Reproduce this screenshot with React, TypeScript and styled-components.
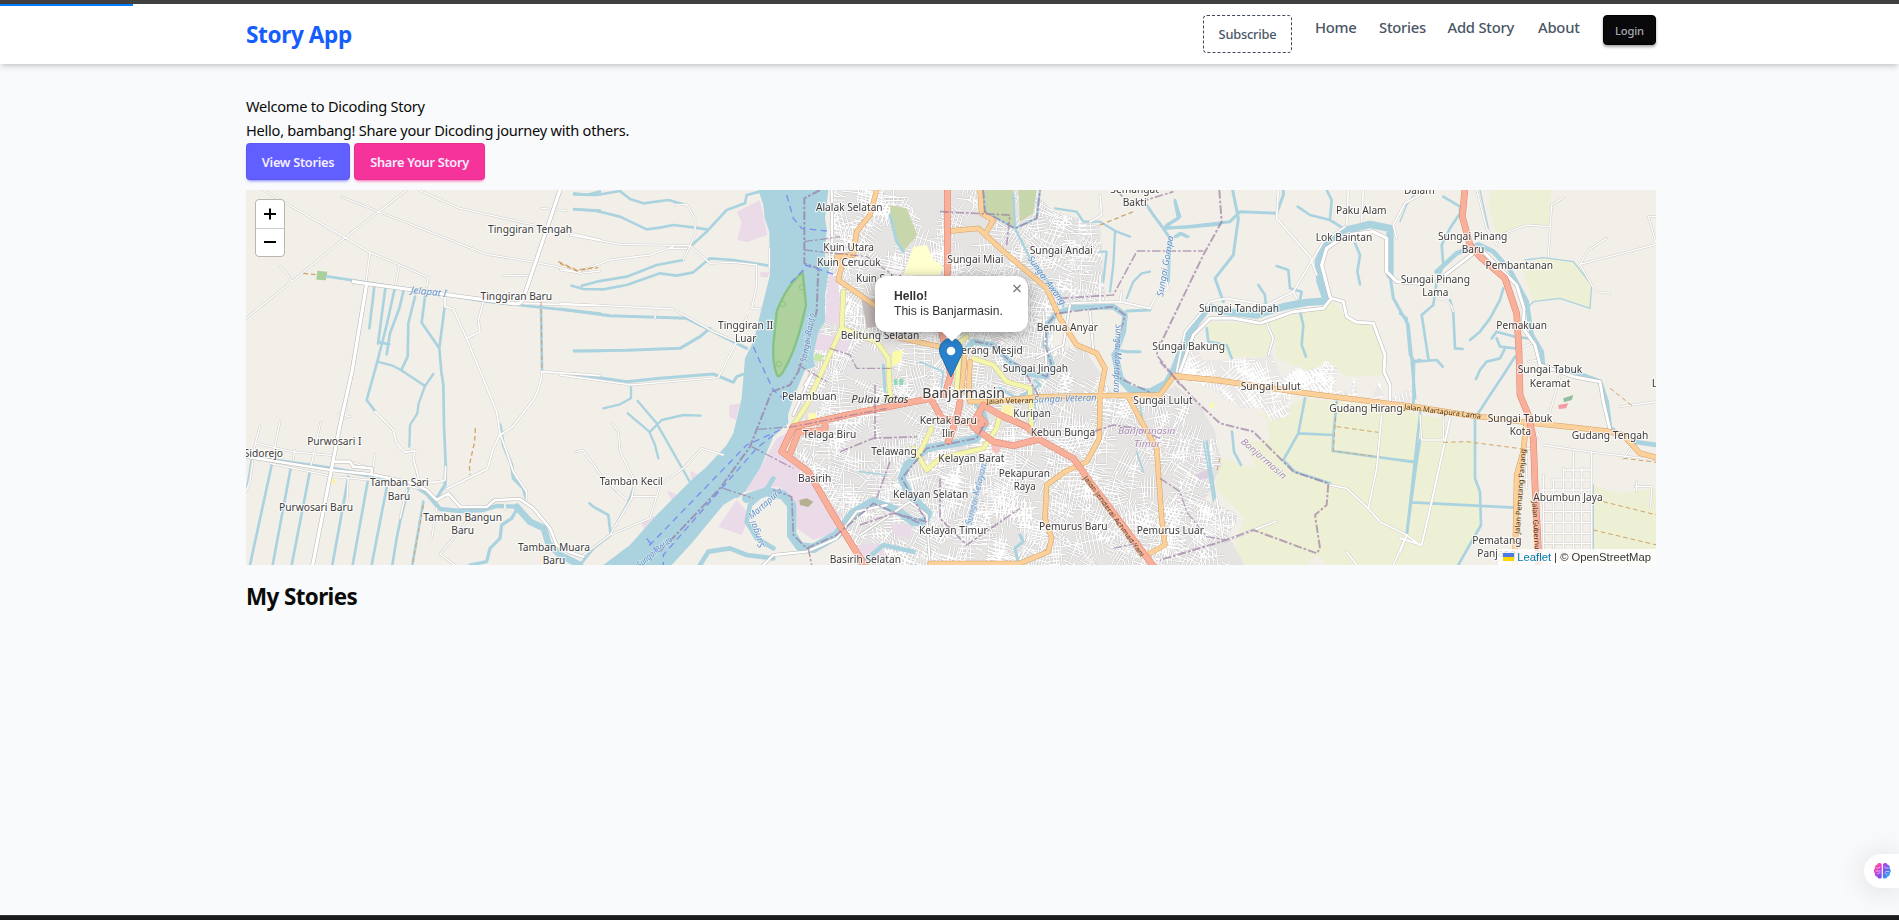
import React from 'react';
import styled, { createGlobalStyle } from 'styled-components';

const Global = createGlobalStyle`
  * { box-sizing: border-box; }
  body { margin: 0; background: #f9fafb; color: #0a0a0a; font: 16px/24px "Noto Sans", "Open Sans", sans-serif; }
  p, h1, h2 { margin: 0; }
  button { font-family: inherit; }
`;

const Page = styled.div`
  height: 920px;
  display: flex;
  flex-direction: column;
  overflow: hidden;
  position: relative;
`;
const Edge = styled.div<{ $bottom?: boolean }>`
  flex: none;
  height: ${p => (p.$bottom ? 5 : 4)}px;
  background: ${p => (p.$bottom ? '#1b1b1d' : '#404040')};
  ${p => p.$bottom && 'border-top: 1px solid #343436; margin-top: auto;'}
`;
const Progress = styled.div`
  position: absolute;
  left: 0;
  top: 4px;
  width: 133px;
  height: 2px;
  background: #007bff;
  z-index: 3;
`;
const Header = styled.header`
  flex: none;
  height: 60px;
  background: #fff;
  box-shadow: 0 4px 6px -1px rgba(0, 0, 0, 0.14), 0 2px 4px -2px rgba(0, 0, 0, 0.12);
`;
const Container = styled.div`
  width: 1410px;
  margin-left: 246px;
`;
const HeaderRow = styled(Container)`
  display: flex;
  justify-content: space-between;
  height: 60px;
`;
const Brand = styled.div`
  color: #155dfc;
  font-size: 22.6px;
  font-weight: 700;
  line-height: 62px;
  letter-spacing: -0.4px;
`;
const Nav = styled.nav`
  display: flex;
  align-items: flex-start;
  gap: 23px;
  padding-top: 11px;
`;
const NavLink = styled.a<{ $w: number }>`
  width: ${p => p.$w}px;
  white-space: nowrap;
  color: #4a5565;
  font-size: 14.8px;
  font-weight: 500;
  line-height: 24px;
  letter-spacing: -0.25px;
`;
const Subscribe = styled.button`
  width: 89px;
  height: 38px;
  padding: 0;
  border: 1px dashed #3f4859;
  border-radius: 4px;
  background: #fff;
  color: #4a5565;
  font-size: 12.8px;
  font-weight: 500;
  letter-spacing: -0.2px;
`;
const Login = styled.button`
  width: 53px;
  height: 30px;
  padding: 0;
  border: 1px solid #000;
  border-radius: 4px;
  background: #09090b;
  color: #a7a8ae;
  font-size: 11.2px;
  font-weight: 500;
  letter-spacing: -0.2px;
  box-shadow: 0 2px 3px rgba(0, 0, 0, 0.35);
`;
const Intro = styled.p`
  font-size: 14.6px;
  letter-spacing: -0.25px;
`;
const Main = styled(Container)`
  padding-top: 30px;
`;
const Actions = styled.div`
  display: flex;
  gap: 4px;
  margin: 1px 0 10px;
`;
const Action = styled.button<{ $color: string; $w: number }>`
  width: ${p => p.$w}px;
  height: 37px;
  padding: 0;
  border: 1px solid rgba(0, 0, 0, 0.06);
  border-radius: 4px;
  background: ${p => p.$color};
  color: #f4edff;
  font-size: 12.8px;
  font-weight: 600;
  letter-spacing: -0.3px;
  box-shadow: 0 3px 3px -2px ${p => p.$color}90, 0 2px 3px -1px ${p => p.$color}50;
`;
const MapBox = styled.section`
  position: relative;
  height: 375px;
  overflow: hidden;
  background: #f2efe9;
  font-family: "Liberation Sans", sans-serif;
`;
const MapArt = styled.svg`
  display: block;
  width: 1410px;
  height: 375px;
  font-family: "Noto Sans", sans-serif;
`;
const ZoomBar = styled.div`
  position: absolute;
  left: 9px;
  top: 9px;
  width: 30px;
  height: 58px;
  border: 1px solid #b9b6b1;
  border-radius: 4px;
  background: #fff;
`;
const ZoomButton = styled.button`
  display: flex;
  width: 28px;
  height: 28px;
  padding: 0;
  border: 0;
  background: none;
  align-items: center;
  justify-content: center;
  & + & { border-top: 1px solid #ccc; padding-bottom: 1px; }
`;
const Popup = styled.div`
  position: absolute;
  left: 629px;
  top: 86px;
  width: 153px;
  height: 56px;
  padding: 13px 19px;
  border-radius: 12px;
  background: #fff;
  color: #333;
  font-size: 12.1px;
  line-height: 15px;
  white-space: nowrap;
  box-shadow: 0 3px 14px rgba(0, 0, 0, 0.4);
`;
const Strong = styled.strong`
  display: block;
`;
const CloseIcon = styled.svg`
  position: absolute;
  right: 7px;
  top: 8px;
`;
const Tip = styled.svg`
  position: absolute;
  left: 66px;
  top: 55px;
`;
const Marker = styled.svg`
  position: absolute;
  left: 692px;
  top: 147px;
`;
const Attribution = styled.div`
  position: absolute;
  right: 0;
  bottom: 0;
  height: 16px;
  padding: 0 5px;
  display: flex;
  align-items: center;
  gap: 3px;
  background: rgba(255, 255, 255, 0.82);
  color: #333;
  font-size: 11.25px;
  line-height: 16px;
  white-space: nowrap;
`;
const AttributionLink = styled.a`
  color: #0078a8;
`;
const Title = styled.h1`
  margin-top: 15px;
  font-size: 22.4px;
  font-weight: 700;
  line-height: 33px;
  letter-spacing: -0.6px;
`;
const Assistant = styled.div`
  position: absolute;
  right: 0;
  top: 854px;
  width: 35px;
  height: 34px;
  padding: 8px 0 0 9px;
  border-radius: 17px 0 0 17px;
  background: #fff;
  box-shadow: 0 2px 30px rgba(0, 0, 0, 0.13);
`;

/* ---------- map data: five sheets, three units to a pixel ---------- */
type Sheet = 'A' | 'B' | 'C' | 'D' | 'E';
const ORIGIN: Record<Sheet, number> = { A: 240, B: 560, C: 860, D: 1160, E: 1400 };
type Area = [Sheet, string, string];

const farm = '#eef0d5';
const works = '#ebdbe8';
const water = '#aad3df';
const areas: Area[] = [
  ['A', '#a8d09a', 'M232 257L262 260L258 286L229 284Z'],
  ['A', '#f9f3a8', 'M274 882H286V896H274Z'],
  ['D', farm, 'M150 410L300 418L450 375L520 350L560 400L630 415L680 520L670 570L560 575L510 535L450 560L350 520L345 440L330 515L200 515L150 480L135 440Z'],
  ['D', farm, 'M430 640L720 670L780 690V1140H500L470 1110L440 1140H240L225 1070L255 1000L165 910L185 820L290 850L250 770L330 765L320 700L280 685L350 690Z'],
  ['E', farm, 'M0 670L60 690L130 700L150 775L230 765L225 880L240 920L245 1020L170 1140H0Z'],
  ['E', farm, 'M275 15H455L445 125L380 120L290 150L265 60Z'],
  ['E', farm, 'M365 245L430 220L520 230L575 300L570 370L480 340L400 350Z'],
  ['E', farm, 'M580 900L650 925L770 910V1140H580Z'],
  ['E', '#8fbf9f', 'M490 640L520 630L515 645L492 652Z'],
  ['E', '#f39aa2', 'M475 660L505 655L498 670L476 672Z'],
  ['B', works, 'M530 80L600 45L622 150L560 172L532 165L545 110Z'],
  ['B', works, 'M600 262L630 262L622 278L602 275Z'],
  ['B', works, 'M508 660L540 655L527 705L508 695Z'],
  ['B', works, 'M390 858L445 882L400 910Z'],
  ['B', works, 'M320 915L390 948L345 965Z'],
  ['B', works, 'M245 1015L285 992L330 1050L265 1072Z'],
];
const townAreas: Area[] = [
  ['B', works, 'M808 260L835 290L845 425L795 410L800 330Z'],
  ['B', works, 'M765 440L872 470L860 500L755 495Z'],
  ['B', works, 'M690 740L655 800L720 850L700 940L650 905L555 920L600 850L650 760Z'],
  ['B', works, 'M700 850L760 880L840 990L850 1035L760 1065L710 1030L690 930Z'],
  ['B', works, 'M475 1025L530 945L570 990L545 1050Z'],
  ['B', works, 'M890 1080L960 1075L980 1120L920 1130Z'],
  ['B', '#b5b08f', 'M718 945L740 940L760 950L745 966L720 960Z'],
  ['B', '#c8e6a8', 'M765 505L790 510L785 530L762 525Z'],
  ['B', '#fbfbb4', 'M745 685L768 683L770 702L744 705Z'],
  ['C', '#c8d7ab', 'M90 60L140 70L172 150L130 200L95 130Z'],
  ['C', '#c8d7ab', 'M375 15H460L465 125L400 100L375 80Z'],
  ['C', '#c8d7ab', 'M475 15H530L520 85L480 110Z'],
  ['C', '#ffffd0', 'M160 185L200 180L220 225L250 245L240 270H130Z'],
  ['C', '#fbfba8', 'M98 500L130 495L120 530L95 545Z'],
  ['C', '#fbf3b0', 'M425 660H460V695H425Z'],
  ['C', '#8fd9b6', 'M102 582H112V600H102ZM118 582H130V600H118Z'],
  ['C', '#f5c2bd', 'M395 775L425 785L415 805L395 798Z'],
  ['C', '#c7bfbd', 'M5 345L60 340L70 420L20 430Z'],
  ['C', '#dccfe0', 'M1005 870L1050 850L1055 875L1020 885Z'],
  ['C', works, 'M90 1015L155 1020L150 1060L100 1045Z'],
  ['D', '#fbfba8', 'M150 655L160 650L162 668L150 668Z'],
];

type Line = [Sheet, number, string];
const streams: Line[] = [
  ['A', 8, 'M260 274L340 286L510 312L740 350L1080 386'],
  ['A', 8, 'M403 305L388 430M436 310L414 476M464 312L440 420L412 530L380 645L405 678M490 320L478 370L450 445L440 508M420 472L448 478M525 335L505 415L503 515L484 555M555 335L545 413L598 490L604 560L610 600L612 720L617 840M614 365L598 490'],
  ['A', 7, 'M412 530L458 542L484 556L555 603L580 567M555 603L536 655L532 685L510 720L508 785'],
  ['A', 13, 'M90 825L270 850L440 880L520 900L560 925L600 972L660 978L730 975L770 963L830 965'],
  ['A', 20, 'M830 965L870 1010L912 1030L925 1075L960 1110L1020 1140'],
  ['A', 8, 'M95 840L30 1140M152 850L98 1140M210 858L155 1140M325 875L277 1140M383 890L338 1140M440 908L395 1140M505 910L480 1010L470 1060L457 1140M550 950L517 1140M903 360L906 555M1003 25L1040 30L1080 20M1003 73L1080 77M1003 498H1080M1003 568L1080 574'],
  ['A', 4, 'M35 815L18 920M906 555Q905 600 880 645L815 728L780 750M520 800L530 870L545 905'],
  ['A', 10, 'M780 720L790 780L815 840L820 880L850 910L858 940M835 965L815 1000L785 1020L780 1060L750 1090L740 1130L690 1140M617 840L615 900L590 940'],
  ['B', 8, 'M42 28L110 30L180 18L210 42L250 55L325 45L370 58M42 72L110 78L180 95L260 133L300 128L340 120L400 127L440 133M600 20L560 30L555 55L500 75L440 140L390 185'],
  ['B', 8, 'M370 225L290 240L200 275L110 290L65 302M35 302L70 312L130 313L200 300L300 265L350 272L400 262L450 220L520 225L625 242'],
  ['B', 9, 'M0 372L150 392L380 400L440 430L560 490M42 498L200 496L360 490L420 455L450 430M42 567L200 590L300 580L460 567L520 592L530 575L548 568'],
  ['B', 7, 'M213 600V640L180 658L130 670M233 648L290 715L395 900M203 685L268 740L285 780L295 820M422 692L370 690L305 705L268 742'],
  ['B', 5, 'M155 714L175 740L180 800L225 890L205 950L150 1050M50 800L68 795L130 880L170 920'],
  ['B', 8, 'M88 955L100 965L145 990L152 1050L100 1090L60 1140'],
  ['B', 14, 'M420 1140L445 1100L510 1090L560 1110L640 1120M900 1140L970 1080L1060 1100'],
  ['B', 28, 'M490 910L530 925M560 940L620 920L670 930L695 960L695 1050L720 1085L760 1090L830 1050L880 985L940 950'],
  ['B', 14, 'M640 880L615 920L570 960L560 1010L590 1060L640 1090'],
  ['C', 24, 'M40 950L110 975L160 1012L195 1010L205 985L150 930L125 880L140 840L200 790L300 772L350 760L375 715L365 680'],
  ['C', 10, 'M365 680L300 600L310 500'],
  ['C', 17, 'M310 500L340 470L400 480L450 530L500 565L560 575L577 540L555 480L560 420L590 385L640 368L760 365L795 390L790 440L765 510'],
  ['C', 22, 'M765 510L780 580L810 612L870 622L920 595L950 540L970 490L1010 410L1045 365'],
  ['C', 7, 'M370 15L375 80L465 130L530 100L540 15M465 130L520 240L600 330L610 365M585 70L650 80L670 110L720 110L770 140L810 155M765 140L760 240L750 320M720 200L740 200L730 290M870 260L845 265L820 290L800 340M460 30L465 130'],
  ['C', 9, 'M860 60L880 90L910 130L930 160L925 290M945 50L955 100L910 130L1000 125L1080 118M945 155L960 145L980 155M770 495L800 500L840 500M800 378L870 375M70 540L75 620M480 1050L490 1070L465 1090L475 1135M90 90L110 170L130 200M420 610L470 640L540 600L525 585'],
  ['C', 5, 'M840 660L850 720M830 800L850 860M0 860L80 870M1030 770L1045 850L1060 950M520 610L530 700L510 740M380 830L350 930L320 1030M240 640L250 560L180 530'],
  ['D', 22, 'M40 560L75 470L110 410L145 365L200 380L290 390L370 365L440 352L500 348L480 290L475 230L500 170L560 135L630 118L690 130V270'],
  ['D', 9, 'M690 270L700 340L745 420L755 520L765 640M765 530L780 525M218 15L235 100L220 210L165 280L190 350M10 130L80 125L210 110L240 80L350 85L370 30V15'],
  ['D', 8, 'M45 45L60 95L20 120M50 155L65 145L85 155M350 243L385 255L390 310L425 320L420 345M295 300L315 330L318 370M585 175L600 210L592 260L600 298M413 65L450 90L510 105L550 130M500 15L515 45L510 105M420 380L430 420L425 480L438 515'],
  ['D', 8, 'M320 415L340 460L325 510M140 430L145 470L200 480L215 520M435 640L415 745L370 825M415 745L520 750L530 650M520 750L518 798L770 832M782 670L740 1050M216 740L222 800L243 840M140 770L155 870L165 940M370 825L405 860L510 895'],
  ['E', 8, 'M130 35L180 65V85L150 130L125 180L130 240L110 290L100 360L65 390L85 520M0 385L20 400L30 510L45 530L110 525L128 545M42 530L40 660M310 310L300 345L270 400L240 440L210 465M150 345L160 385L165 490L188 492'],
  ['E', 8, 'M275 460L290 440L345 455L400 462M290 460L300 485L345 490M315 490L300 520L260 530L240 555L228 582M345 515L310 570L270 630L225 700V880L240 920L243 1020L175 1140M60 765L50 830L20 1050M0 825L50 832M35 952L345 968'],
  ['E', 14, 'M110 260L170 205L235 178L280 200L330 255L380 350L395 450L425 500L430 550L520 560L600 590L620 650L630 730L700 770L770 780'],
  ['E', 4, 'M375 225L430 218L520 230L575 300L570 370L480 340L400 350L380 370M240 15L265 130M0 110L20 60L45 25M580 900V1100'],
];
const lanes: Line[] = [
  ['A', 4, 'M70 15L315 158L390 203L480 240L565 278L560 305M500 15L315 158L155 290L18 400M120 245Q145 265 155 290M305 36L740 208L885 232L950 245L1020 265L1080 258M535 15L660 70L1080 165M905 70L980 77M788 271L870 272M390 203L378 290M478 240L466 305M340 298L338 285'],
  ['A', 5, 'M615 330V365L640 372L680 460L770 680L780 745L800 800L820 860L860 920V945M730 350L715 405L720 440L680 460M906 560L1080 572M905 560Q905 600 880 645L815 728L780 750L760 790L742 852L620 912M405 680L460 735L470 775L495 802L525 797L520 820L540 895L600 890L615 885L617 845M850 355L1080 362'],
  ['A', 4, 'M60 722L45 780L30 890L18 920M120 710L95 830M242 713L210 855M50 775L155 800L280 812M405 808L397 862M280 830H330L395 850M700 985L600 1108L645 1140M480 1000L500 915M165 795L160 820M295 685L330 695M318 640V700M325 880L320 960M575 1060L590 970M795 950V975M90 835L280 875L440 890L560 915'],
  ['B', 4, 'M30 150L180 178L390 182L450 235L520 232L590 240V300L575 370L600 372M345 60L380 58L405 100V150L390 182L370 225M0 355L340 372L460 440L530 470M560 395L530 470L475 578M0 570L215 600L475 578M155 714L175 740L180 800L225 890L215 940L150 1050L70 1110M490 810L425 790L370 850L300 900L270 1000L150 1050M628 190V250M340 185L270 210L150 225L50 262L0 255M330 190H380M285 375V400M50 800L68 795L130 880L200 945M215 935L290 935'],
  ['C', 5, 'M690 110L725 90L720 30M620 355L780 350L870 370L890 330L925 310L920 290M780 350L785 320M720 270V350'],
  ['D', 5, 'M355 15L350 100L450 215L470 270M555 125L490 170L400 320L410 340M50 560L75 440L150 350L200 340L320 360L400 320M565 15L560 120M610 15L605 110M780 30L735 55L700 120L710 160M665 690L650 850L625 970M510 900L560 910L625 970L660 1010L740 1050L780 1080M740 1050L700 1140M320 415L340 460L325 510M170 940L190 1070M560 1100L590 1140M190 1070L350 1008'],
  ['E', 4, 'M230 15L260 130L290 180M490 38L455 60L445 215M290 180L300 150L380 120L450 125M770 178L540 238L565 195L620 160M540 238L575 300L590 320L630 325M480 575L450 680L420 720M410 740L430 780L560 800L770 825M60 690L65 765H130V700M770 95H745L770 180M710 890V920M705 905H755L752 965M115 340Q150 340 160 380M360 490L405 470M385 530L420 525M370 790H400L410 750M370 885L400 880M670 820L700 780M660 665L770 650'],
  ['E', 4, 'M430 870V1090M460 885V1090M490 850V1100M520 850V1100M545 850V1100M575 800V1100M490 855H575M455 885H575M420 915H575M420 950H575M430 980H575M420 1012H575M430 1045H575M430 1075H575M520 800V850M380 800V910'],
  ['E', 6, 'M150 700L95 950L65 1080L0 1060M0 1100L20 1050'],
];
const roads: Line[] = [
  ['A', 10, 'M960 15L850 340Q845 360 820 356L380 296L340 290'],
  ['A', 10, 'M380 296L336 560L300 720L275 850L218 1140'],
  ['A', 8, 'M18 815L270 855L395 868L520 895L560 915L590 945L625 925L660 965L740 966L765 945L840 942L880 970L930 1030L950 1080L985 1100L1030 1115M280 830H330L340 845L395 850V868'],
  ['B', 7, 'M815 15L817 180M700 690L760 560L735 600M640 1110L740 1100L830 1060L890 980L980 960M640 1110L610 1140'],
  ['D', 9, 'M60 560L100 450L150 400L220 400L300 415L400 380L490 370L515 340L550 350L560 395L590 412L640 415L675 510L672 560L690 600V650'],
  ['D', 10, 'M510 335L485 240L500 190L560 150L640 140L680 160V260L710 290L780 295'],
  ['E', 9, 'M110 290L220 205L245 195L300 250L350 300L372 370L370 430L405 480L420 540L520 575L600 590L610 650L630 735'],
  ['C', 6, 'M0 1050L90 990L150 950L200 990L210 1140M550 380L560 560M690 380L700 500M630 360L610 480L530 520'],
];
const yellows: Line[] = [
  ['B', 13, 'M700 720L740 660L845 430L850 320M845 430L950 470L985 520L990 640'],
  ['C', 13, 'M340 520L400 540L440 590L510 610L515 740M160 790L200 855L240 820L370 790L410 730L420 690M180 800L215 730M290 620L300 470L320 455'],
];
const oranges: Line[] = [
  ['B', 13, 'M950 15L930 90L890 140L880 210L830 215L845 245L835 285L950 365'],
  ['C', 13, 'M360 15L365 85L400 105L380 140M270 138L355 130L420 190L560 310L600 400L650 480L710 505L735 550L720 630L718 760L680 830L615 860L560 900L555 1000L575 1060L565 1100L480 1135H210M325 640L330 530M305 620L315 500M100 455L240 485'],
  ['C', 13, 'M330 650L390 650L540 635L720 632L900 630L940 575L1080 585M805 635L850 720L890 790L905 1000L915 1080L860 1110'],
  ['D', 14, 'M40 572L200 590L440 625L600 645L780 668'],
  ['E', 14, 'M60 668L200 690L380 712L620 738L670 750L720 805L770 818M378 720L370 800L350 870L345 1140'],
];
const reds: Line[] = [
  ['B', 17, 'M1115 640L900 682L700 725L665 800L745 860L820 990L920 1150M795 705V735L715 742L688 812'],
  ['C', 17, 'M262 10V330L245 440L272 570L255 630M215 645L245 700L340 715L370 660L420 690L500 725L540 765L640 820L690 890L885 1150M300 650L290 700L275 740L265 770M345 730L400 770L460 782L540 762M340 725L375 715L355 690'],
  ['E', 17, 'M195 10L187 95L210 180L240 215L315 280L350 385L357 500L360 630L385 690L400 760L405 900L418 1150'],
];
const borders: Line[] = [
  ['B', 6, 'M780 15L733 40V235L775 250L770 380L715 560L690 600L635 620L570 785L480 910L300 1100'],
  ['B', 4, 'M595 733L700 725L980 670M575 785L700 850M733 195L920 215L1000 270M733 170L840 155M490 910L580 940M715 540L800 590M810 490L870 510L890 550L1000 550'],
  ['B', 5, 'M640 915L695 935L700 1050L740 1090L830 1050L940 955L1010 985L1080 1015M745 1090L755 1140M840 800L940 760L1070 755M945 600V760M950 940L990 830'],
  ['D', 6, 'M178 15L185 110L130 210L0 480M0 530L110 650L180 715L280 740L400 860L505 895L500 960L465 990L480 1090L470 1105L280 1035L200 1065L0 1125'],
  ['D', 4, 'M0 880L60 920L80 980L140 1055L200 1065M-70 198L130 198M-140 1090L-70 1075'],
  ['C', 5, 'M370 15L375 80L465 130L530 100L540 15M240 80L450 90L440 180M345 470L400 480L450 530L560 575L575 540L555 480L560 420L590 385L760 365L795 390L765 510L780 580L870 622M0 1020L100 985L200 1010L125 880L200 790L350 760L375 715M600 340L760 330L830 200M240 880V1000L320 1080L480 970M770 15L810 60L940 20M500 570L540 640M700 740L760 720L830 730L900 760M900 470L890 510L930 560L960 600'],
];
const ferries: Line[] = [
  ['B', 4, 'M680 30L700 100L725 130L800 138M580 485L600 530L640 615L680 650M660 735L560 780L260 1090M640 750L590 790L310 1110V1140M735 240L830 270M730 255L685 300M260 1060L290 1100'],
];
const tracks: Line[] = [
  ['A', 4, 'M190 265L230 269M706 730L704 770L688 840L690 870M955 230L1010 255L1075 248'],
  ['B', 4, 'M0 235L50 258L110 245'],
  ['D', 3, 'M530 725L655 742M530 650L520 798L650 815M180 820L170 860'],
  ['C', 4, 'M720 120L820 80'],
  ['E', 3, 'M130 772L200 770L370 792M610 950L770 990M580 1035L770 1080M630 610L700 665M670 820L770 832'],
  ['A', 3, 'M550 960L517 1140M903 350L906 555'],
];

type Label = [Sheet, number, number, number, string];
const labels: Label[] = [
  ['A', 870, 143, 252, 'Tinggiran Tengah'], ['A', 829, 345, 215, 'Tinggiran Baru'], ['A', 283, 781, 163, 'Purwosari I'],
  ['A', 70, 815, 118, 'Sidorejo'], ['A', 478, 904, 176, 'Tamban Sari'], ['A', 477, 944, 68, 'Baru'], ['A', 228, 978, 222, 'Purwosari Baru'],
  ['A', 668, 1008, 236, 'Tamban Bangun'], ['A', 668, 1048, 68, 'Baru'], ['A', 942, 1099, 216, 'Tamban Muara'], ['A', 942, 1138, 68, 'Baru'],
  ['B', 868, 78, 200, 'Alalak Selatan'], ['B', 866, 197, 152, 'Kuin Utara'], ['B', 867, 244, 190, 'Kuin Cerucuk'], ['B', 975, 291, 174, 'Kuin Selatan'],
  ['B', 557, 431, 166, 'Tinggiran II'], ['B', 557, 471, 64, 'Luar'], ['B', 960, 463, 236, 'Belitung Selatan'], ['B', 748, 646, 164, 'Pelambuan'],
  ['B', 809, 760, 160, 'Telaga Biru'], ['B', 1002, 810, 136, 'Telawang'], ['B', 764, 890, 100, 'Basirih'], ['B', 214, 899, 190, 'Tamban Kecil'],
  ['B', 916, 1134, 214, 'Basirih Selatan'],
  ['C', 346, 233, 168, 'Sungai Miai'], ['C', 604, 206, 190, 'Sungai Andai'], ['C', 824, 24, 146, 'Semangat'], ['C', 824, 62, 72, 'Bakti'],
  ['C', 622, 439, 184, 'Benua Anyar'], ['C', 370, 508, 236, 'Seberang Mesjid'], ['C', 526, 562, 196, 'Sungai Jingah'], ['C', 986, 495, 218, 'Sungai Bakung'],
  ['C', 516, 697, 112, 'Kuripan'], ['C', 265, 718, 172, 'Kertak Baru'], ['C', 264, 757, 36, 'Ilir'], ['C', 609, 754, 194, 'Kebun Bunga'],
  ['C', 334, 830, 198, 'Kelayan Barat'], ['C', 493, 875, 154, 'Pekapuran'], ['C', 494, 915, 66, 'Raya'], ['C', 212, 938, 226, 'Kelayan Selatan'],
  ['C', 280, 1047, 206, 'Kelayan Timur'], ['C', 640, 1034, 206, 'Pemurus Baru'], ['C', 931, 1048, 202, 'Pemurus Luar'], ['C', 909, 656, 178, 'Sungai Lulut'],
  ['D', 604, 87, 152, 'Paku Alam'], ['D', 552, 168, 170, 'Lok Baintan'], ['D', 237, 382, 240, 'Sungai Tandipah'], ['D', 332, 616, 180, 'Sungai Lulut'],
  ['D', 618, 682, 220, 'Gudang Hirang'],
  ['E', 58, 28, 92, 'Dalam'], ['E', 218, 166, 208, 'Sungai Pinang'], ['E', 219, 205, 68, 'Baru'], ['E', 358, 252, 203, 'Pembantanan'],
  ['E', 106, 293, 208, 'Sungai Pinang'], ['E', 106, 332, 78, 'Lama'], ['E', 365, 433, 152, 'Pemakuan'], ['E', 450, 565, 194, 'Sungai Tabuk'],
  ['E', 450, 605, 122, 'Keramat'], ['E', 360, 711, 194, 'Sungai Tabuk'], ['E', 361, 750, 64, 'Kota'], ['E', 630, 763, 230, 'Gudang Tengah'],
  ['E', 504, 948, 208, 'Abumbun Jaya'], ['E', 291, 1078, 148, 'Pematang'], ['E', 290, 1117, 116, 'Panjang'], ['E', 783, 605, 56, 'Lok'],
];
// sheet, x, y, length, angle, colour, size, text
type Tilted = [Sheet, number, number, number, number, string, number, string];
const tilted: Tilted[] = [
  ['A', 565, 330, 108, 6, '#5f8fc4', 29, 'Jelapat I'],
  ['B', 752, 460, 150, -80, '#5f8fc4', 27, 'Sungai Barito'],
  ['B', 600, 1045, 85, -110, '#5f8fc4', 27, 'Sungai'],
  ['B', 622, 962, 125, -42, '#5f8fc4', 27, 'Martapura'],
  ['B', 290, 1108, 130, -39, '#5f8fc4', 27, 'Sungai Barito'],
  ['C', 553, 292, 175, 54, '#5f8fc4', 28, 'Sungai Awang'],
  ['C', 616, 650, 188, -2, '#5f8fc4', 28, 'Sungai Veteran'],
  ['C', 925, 245, 185, -80, '#5f8fc4', 28, 'Sungai Gompa'],
  ['C', 764, 520, 205, 92, '#5f8fc4', 28, 'Sungai Martapura'],
  ['C', 356, 930, 190, -76, '#5f8fc4', 28, 'Sungai Kelayan'],
  ['C', 860, 748, 172, 0, '#a98bb4', 29, 'Banjarmasin'],
  ['C', 862, 785, 80, 0, '#a98bb4', 29, 'Timur'],
  ['D', 305, 828, 170, 41, '#a98bb4', 28, 'Banjarmasin'],
  ['B', 960, 653, 172, 0, '#3e3b3b', 31, 'Pulau Tatas'],
];
const streetNames: Tilted[] = [
  ['C', 450, 655, 140, -1, '#4a3413', 22, 'Jalan Veteran'],
  ['E', 127, 687, 232, 7, '#4a3413', 22, 'Jalan Martapura Lama'],
  ['E', 368, 920, 255, -86, '#4a3413', 22, 'Jalan Pematang Panjang'],
  ['C', 757, 998, 295, 54, '#54201a', 22, 'Jalan Jenderal Achmad Yani'],
  ['E', 403, 1074, 250, 87, '#54201a', 22, 'Jalan Gubernur Syarkawi'],
];

/* Dense town streets: bundles of short parallel lanes from a seeded sequence */
function makeStreets(seed: number, count: number, x: number, y: number, w: number, h: number, base: number) {
  let s = seed;
  const rnd = () => {
    s = (s * 1664525 + 1013904223) % 4294967296;
    return s / 4294967296;
  };
  let d = '';
  for (let i = 0; i < count; i++) {
    const cx = x + rnd() * w;
    const cy = y + rnd() * h;
    const a = base + (rnd() - 0.5) * 0.9 + (rnd() > 0.5 ? Math.PI / 2 : 0);
    const n = 3 + Math.floor(rnd() * 5);
    const len = 5 + rnd() * 12;
    const gap = 2.6 + rnd() * 1.8;
    const c = Math.cos(a);
    const q = Math.sin(a);
    for (let k = 0; k < n; k++) {
      const off = (k - n / 2) * gap;
      const l = len * (0.6 + rnd() * 0.5);
      d += `M${(cx - q * off - c * l).toFixed(1)} ${(cy + c * off - q * l).toFixed(1)}l${(c * l * 2).toFixed(1)} ${(q * l * 2).toFixed(1)}`;
    }
    d += `M${(cx - q * n * gap).toFixed(1)} ${(cy + c * n * gap).toFixed(1)}L${(cx + q * n * gap).toFixed(1)} ${(cy - c * n * gap).toFixed(1)}`;
  }
  return d;
}
const townLayers = [makeStreets(41, 420, 785, 185, 450, 385, 0.3), makeStreets(77, 380, 785, 185, 450, 385, 0.15)];
const villageStreets = makeStreets(9, 70, 1180, 355, 220, 70, 1.2);
const townOutline =
  'M832 190H1030L1055 212L1100 225L1105 300L1058 305L1052 345L1085 350L1100 372L1115 398L1150 402L1175 385L1200 405L1215 430L1222 465L1205 500L1240 515L1228 535L1245 565H865L835 515L800 478L788 465L793 425L810 368L825 300L828 250Z';
const villageOutline =
  'M1183 365L1196 342L1203 360L1258 358L1272 354L1282 378L1298 365L1304 372L1322 366L1325 360L1338 368L1334 390L1350 392L1354 375L1358 397L1372 398L1380 380L1384 402L1412 387L1410 405L1290 393L1290 415L1272 422L1262 408L1240 408L1210 388L1180 378Z';

const place = (s: Sheet) => `translate(${ORIGIN[s]} 185) scale(.33333)`;

function Lines({ data, color, extra = 0, dash, opacity }: { data: Line[]; color: string; extra?: number; dash?: string; opacity?: number }) {
  return (
    <g fill="none" stroke={color} strokeLinejoin="round" strokeLinecap={dash ? 'butt' : 'round'} strokeDasharray={dash} opacity={opacity}>
      {data.map(([s, w, d], i) => (
        <path key={i} transform={place(s)} strokeWidth={w + extra} d={d} />
      ))}
    </g>
  );
}
function Areas({ data }: { data: Area[] }) {
  return (
    <>
      {data.map(([s, c, d], i) => (
        <path key={i} transform={place(s)} fill={c} d={d} />
      ))}
    </>
  );
}
function TiltedText({ data, italic, halo }: { data: Tilted[]; italic?: boolean; halo: string }) {
  return (
    <g textAnchor="middle" fontStyle={italic ? 'italic' : 'normal'} paintOrder="stroke" stroke={halo} strokeWidth={4} strokeLinejoin="round">
      {data.map(([s, x, y, w, a, c, size, t], i) => (
        <text key={i} transform={`${place(s)} translate(${x} ${y}) rotate(${a})`} fontSize={size} textLength={w} lengthAdjust="spacingAndGlyphs" fill={c}>
          {t}
        </text>
      ))}
    </g>
  );
}

function CityMap() {
  return (
    <MapArt viewBox="246 190 1410 375" aria-label="Map of Banjarmasin">
      <defs>
        <clipPath id="town"><path d={townOutline} /></clipPath>
        <clipPath id="village"><path d={villageOutline} /></clipPath>
      </defs>
      <rect x="246" y="190" width="1410" height="375" fill="#f2efe9" />
      <Areas data={areas} />
      <g clipPath="url(#town)">
        <path d={townOutline} fill="#e6e4e2" />
        {townLayers.map((d, i) => (
          <g key={i} fill="none">
            <path d={d} stroke="#c6c4c3" strokeWidth="2" />
            <path d={d} stroke="#fff" strokeWidth="1.2" />
          </g>
        ))}
      </g>
      <Areas data={townAreas} />
      <g clipPath="url(#village)">
        <path d={villageOutline} fill="#ebe8e5" />
        <path d={villageStreets} fill="none" stroke="#d6d3d1" strokeWidth="1.9" />
        <path d={villageStreets} fill="none" stroke="#fff" strokeWidth="1.3" />
      </g>
      <path
        transform={place('B')}
        fill={water}
        d="M595 15L610 60L614 100L628 140L630 270L605 370L580 470L555 520L545 640L520 745L500 780L440 845L400 880L350 930L290 990L210 1080L130 1140H335L395 1075L490 960L555 920L600 850L640 755L685 715L684 690L700 640L735 555L765 545L760 510L775 440L795 410L795 330L808 250L795 220L800 130L795 100L805 15Z"
      />
      <Lines data={streams} color={water} />
      <path transform={place('B')} fill="#aed19e" stroke="#85c384" strokeWidth="7" d="M728 262Q734 320 738 360Q712 485 675 550Q660 580 652 572Q637 540 640 480L650 380Q680 300 728 262Z" />
      <g transform={place('B')} fill="none" stroke="#85c384" strokeWidth="2.5">
        <circle cx="669" cy="357" r="8" /><circle cx="726" cy="307" r="8" /><circle cx="657" cy="537" r="8" />
      </g>
      <Lines data={lanes} color="#cfccca" extra={3} />
      <Lines data={lanes} color="#fff" />
      <Lines data={roads} color="#b9b7b6" extra={3} />
      <Lines data={roads} color="#fff" />
      <Lines data={yellows} color="#cfc98c" extra={3} />
      <Lines data={yellows} color="#f4f6ae" />
      <Lines data={oranges} color="#d3a264" extra={3} />
      <Lines data={oranges} color="#fbd09a" />
      <Lines data={reds} color="#e2826c" extra={3} />
      <Lines data={reds} color="#f8b09b" />
      <Lines data={borders} color="#93709c" dash="26 6 8 6" opacity={0.62} />
      <Lines data={ferries} color="#7a8ff0" dash="20 14" />
      <Lines data={tracks} color="#cfa46b" dash="14 9" />
      <TiltedText data={tilted} italic halo="rgba(255,255,255,.55)" />
      <TiltedText data={streetNames} halo="rgba(255,225,180,.5)" />
      <g textAnchor="middle" fill="#3e3b3b" paintOrder="stroke" stroke="rgba(255,255,255,.75)" strokeWidth="7" strokeLinejoin="round" fontSize="31.500">
        {labels.map(([s, x, y, w, t], i) => (
          <text key={i} transform={place(s)} x={x} y={y} textLength={w} lengthAdjust="spacingAndGlyphs">{t}</text>
        ))}
        <text transform={place('C')} x="311" y="640" fontSize="41" textLength="248" lengthAdjust="spacingAndGlyphs">Banjarmasin</text>
      </g>
    </MapArt>
  );
}

const BrainSvg = styled.svg`
  display: block;
`;
function BrainIcon() {
  return (
    <BrainSvg width="19" height="18" viewBox="0 0 19 18">
      <defs>
        <linearGradient id="brainLeft" x1="0" y1="0" x2=".5" y2="1">
          <stop offset="0" stopColor="#ff9a2e" /><stop offset=".4" stopColor="#f23fc0" /><stop offset="1" stopColor="#7b4df2" />
        </linearGradient>
        <linearGradient id="brainRight" x1="0" y1="0" x2=".6" y2="1">
          <stop offset="0" stopColor="#c73bdd" /><stop offset=".6" stopColor="#5c6cf5" /><stop offset="1" stopColor="#25b5f5" />
        </linearGradient>
      </defs>
      <path fill="url(#brainLeft)" d="M8.700 2.500C7.500.3 4.500.8 4 2.800 2 3 1.400 5 2.100 6.200.4 7.500.5 10 1.800 11c-.4 2 .7 3.300 2.200 3.600.6 2.200 3.600 2.800 4.700.8z" />
      <path fill="url(#brainRight)" d="M9.900 2.500C11.100.3 14.100.8 14.600 2.800c2 .2 2.600 2.200 1.900 3.400 1.700 1.300 1.600 3.800.3 4.800.4 2-.7 3.300-2.200 3.600-.6 2.200-3.600 2.800-4.700.8z" />
      <path fill="none" stroke="#fff" strokeOpacity=".75" strokeWidth=".8" d="M3 6h3.200l1-1.500M2.500 9h5M4 12.500l1.500-1.500h2M15.600 6h-3.200l-1-1.500M16.100 9.500h-3l-1.500 1.300M14 13l-1.500-2" />
    </BrainSvg>
  );
}

export default function App() {
  return (
    <Page>
      <Global />
      <Edge />
      <Progress />
      <Header>
        <HeaderRow>
          <Brand>Story App</Brand>
          <Nav>
            <Subscribe>Subscribe</Subscribe>
            <NavLink $w={41}>Home</NavLink>
            <NavLink $w={45.5}>Stories</NavLink>
            <NavLink $w={67.5}>Add Story</NavLink>
            <NavLink $w={42}>About</NavLink>
            <Login>Login</Login>
          </Nav>
        </HeaderRow>
      </Header>
      <Main>
        <Intro>Welcome to Dicoding Story</Intro>
        <Intro>Hello, bambang! Share your Dicoding journey with others.</Intro>
        <Actions>
          <Action $color="#615fff" $w={104}>View Stories</Action>
          <Action $color="#f6339a" $w={131}>Share Your Story</Action>
        </Actions>
        <MapBox>
          <CityMap />
          <Marker width="26" height="42" viewBox="0 0 26 42">
            <path d="M13 1.500C6.500 1.500 1.500 6.500 1.500 13c0 3.600 1.400 6.200 3.100 9.300L13 40l8.400-17.700c1.700-3.100 3.100-5.700 3.100-9.300C24.500 6.500 19.500 1.500 13 1.500z" fill="#2a81cb" stroke="#2268a3" />
            <circle cx="13" cy="14" r="4.300" fill="#fff" />
          </Marker>
          <Popup>
            <Strong>Hello!</Strong>
            This is Banjarmasin.
            <CloseIcon width="8" height="9" viewBox="0 0 8 9"><path d="M.5 1l7 7M7.500 1l-7 7" stroke="#757575" strokeWidth="1.200" /></CloseIcon>
            <Tip width="22" height="11" viewBox="0 0 22 11"><path d="M0 0H22L11 10.500Z" fill="#fff" /></Tip>
          </Popup>
          <ZoomBar>
            <ZoomButton aria-label="Zoom in"><svg width="12" height="12"><path d="M0 6H12M6 .5V11.500" stroke="#000" strokeWidth="2" /></svg></ZoomButton>
            <ZoomButton aria-label="Zoom out"><svg width="12" height="12"><path d="M0 6H12" stroke="#000" strokeWidth="2" /></svg></ZoomButton>
          </ZoomBar>
          <Attribution>
            <svg width="11" height="8"><path fill="#4c7be1" d="M0 0h11v4H0z" /><path fill="#ffd500" d="M0 4h11v4H0z" /></svg>
            <AttributionLink>Leaflet</AttributionLink>
            <span>| © OpenStreetMap</span>
          </Attribution>
        </MapBox>
        <Title>My Stories</Title>
      </Main>
      <Assistant><BrainIcon /></Assistant>
      <Edge $bottom />
    </Page>
  );
}
